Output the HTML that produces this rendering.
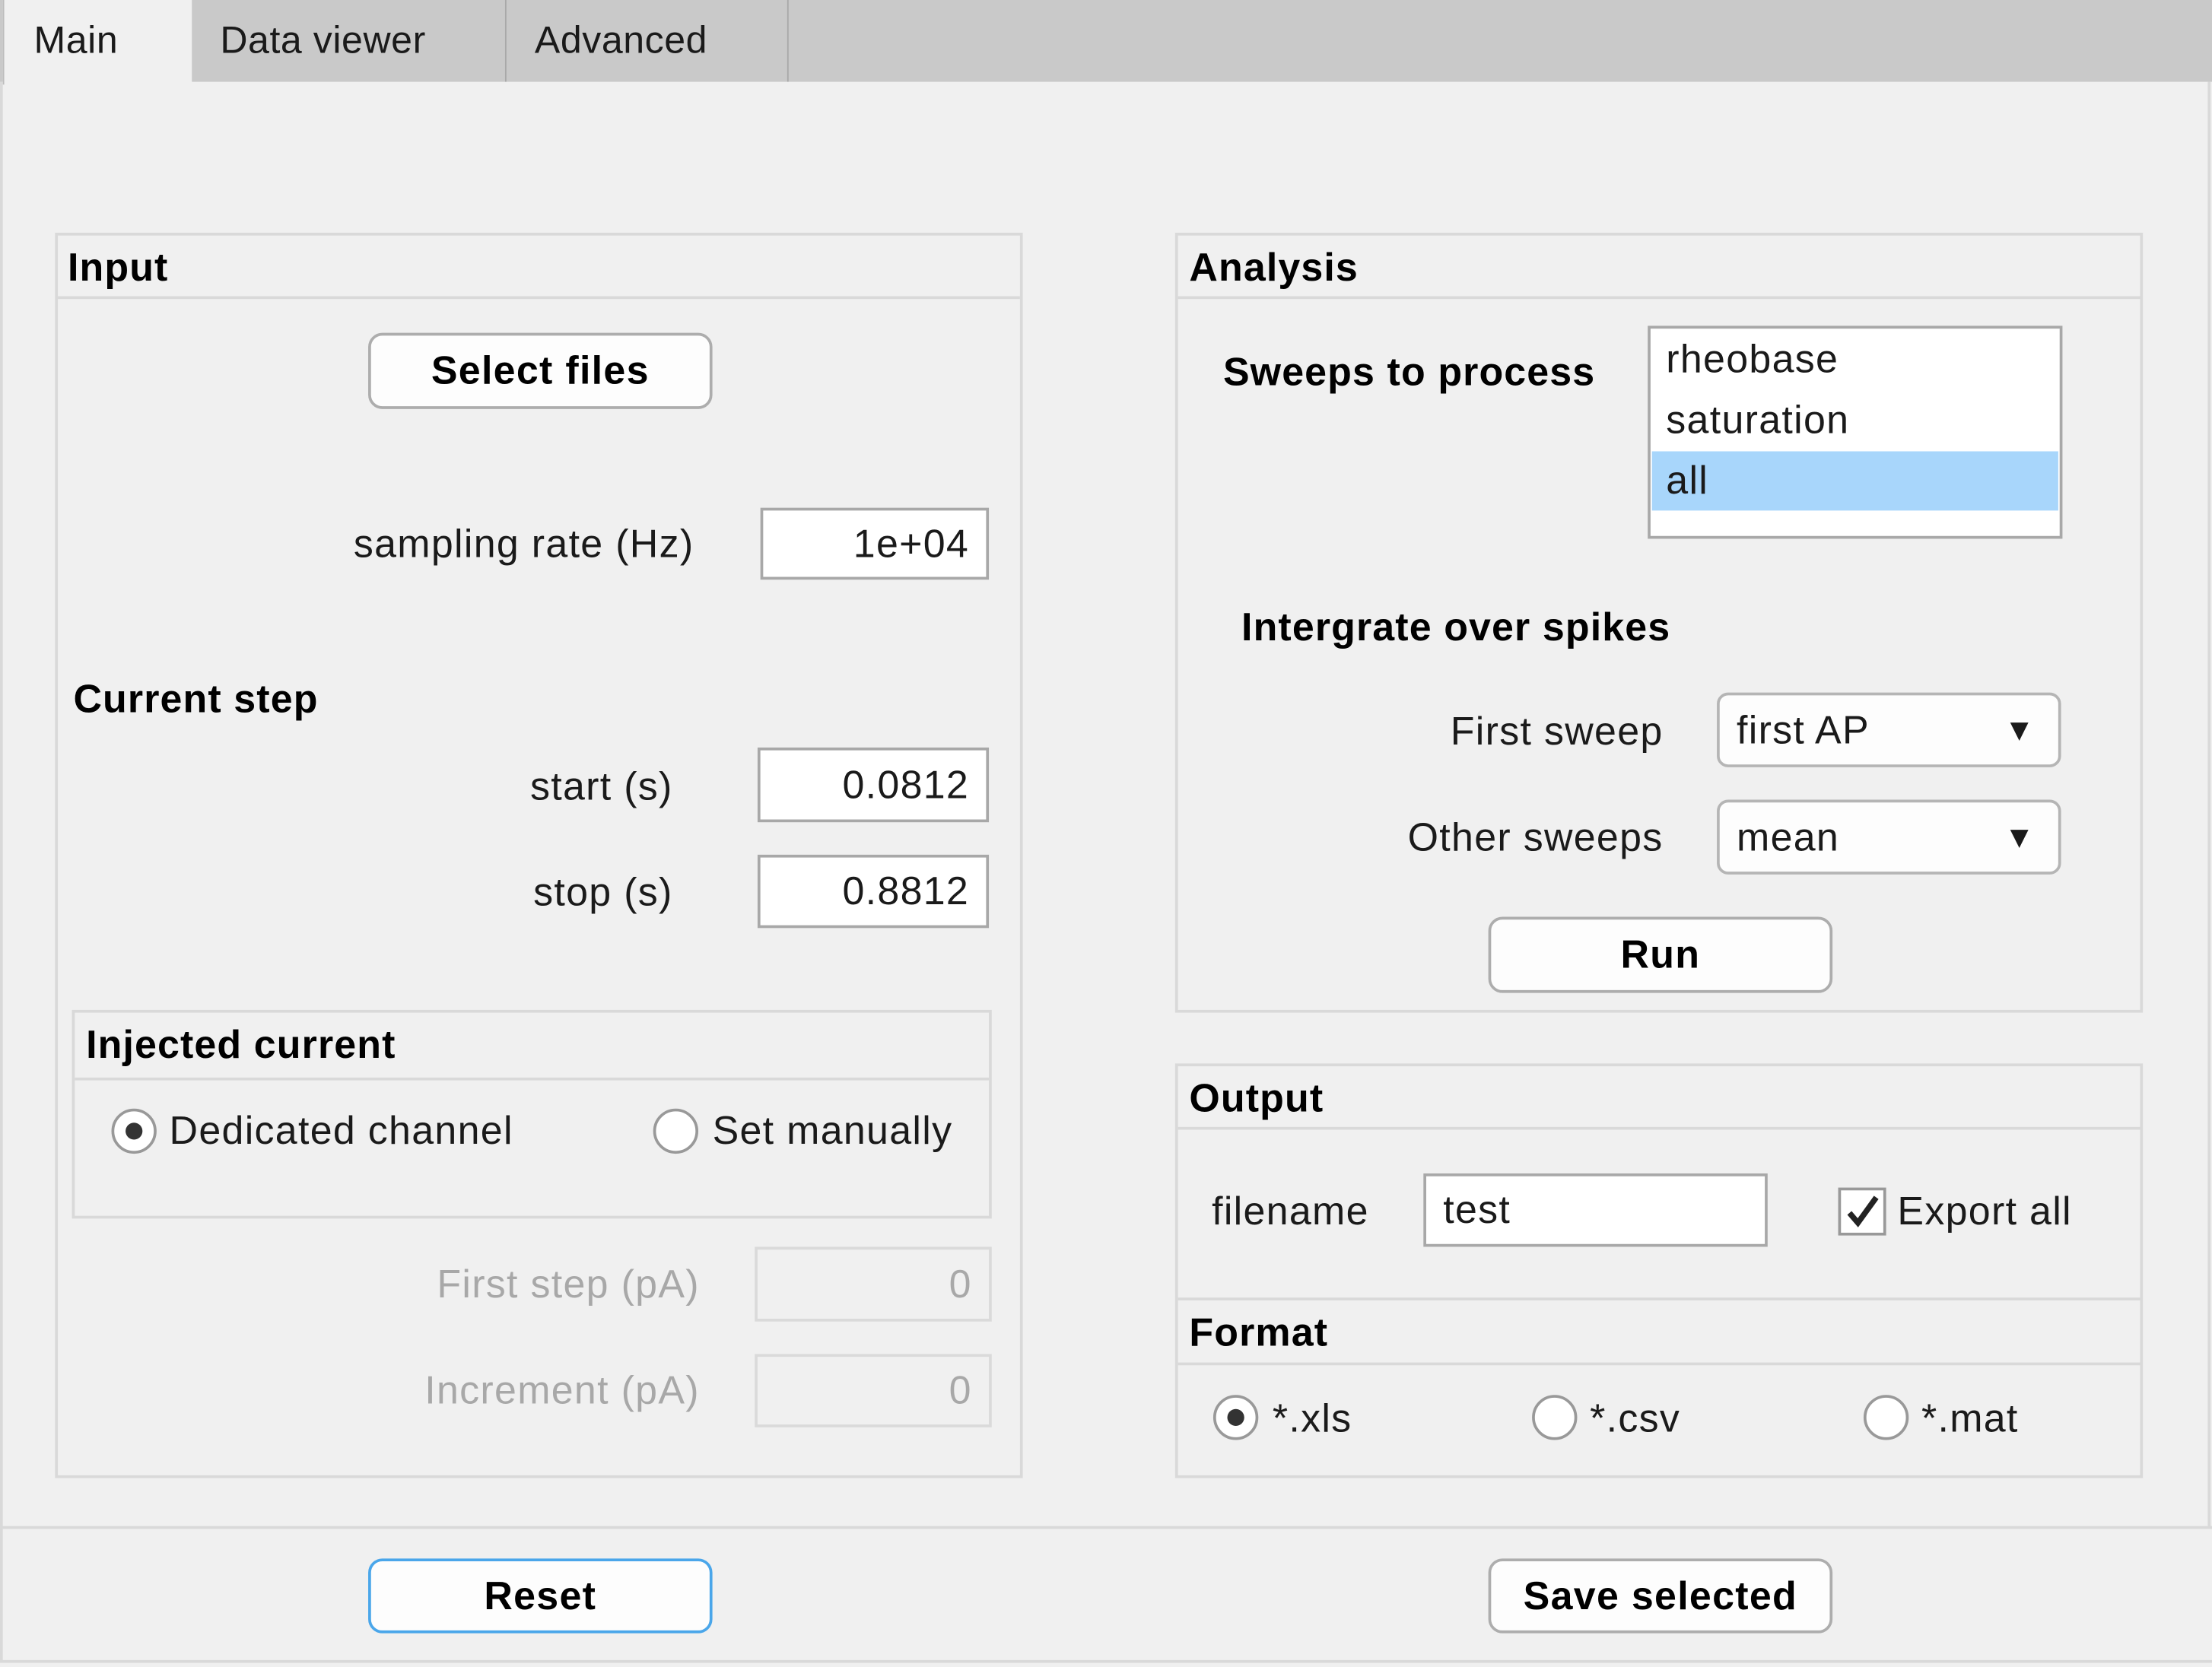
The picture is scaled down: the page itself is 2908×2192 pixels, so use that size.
<!DOCTYPE html>
<html><head><meta charset="utf-8">
<style>
html,body{margin:0;padding:0;background:#f0f0f0;overflow:hidden}
#root{position:absolute;left:0;top:0;width:1568px;height:1182px;transform:scale(1.8546);transform-origin:0 0;background:#f0f0f0;font-family:"Liberation Sans",Arial,sans-serif;font-size:28px;letter-spacing:0.7px;color:#1a1a1a}
.a{position:absolute;white-space:nowrap}
.b{font-weight:bold;color:#000;letter-spacing:0.6px}
.t{line-height:1;transform:translateY(-50%)}
.tab{font-size:27px;letter-spacing:0.3px}
.panel{position:absolute;border:2px solid #d9d9d9;box-sizing:border-box}
.hl{position:absolute;left:0;right:0;height:2px;background:#d9d9d9}
.btn{position:absolute;box-sizing:border-box;border:2px solid #adadad;border-radius:10px;background:#fdfdfd;font-weight:bold;color:#000;display:flex;align-items:center;justify-content:center}
.edit{position:absolute;box-sizing:border-box;border:2px solid #a8a8a8;background:#fff;display:flex;align-items:center;justify-content:flex-end;padding-right:12px}
.dis{background:#f0f0f0;border-color:#dadada;color:#a8a8a8}
.radio{position:absolute;width:32px;height:32px;box-sizing:border-box;border:2px solid #999;border-radius:50%;background:#fff}
.radio.on::after{content:"";position:absolute;left:8px;top:8px;width:12px;height:12px;border-radius:50%;background:#333}
.dd{position:absolute;box-sizing:border-box;border:2px solid #b5b5b5;border-radius:8px;background:#fdfdfd;display:flex;align-items:center;padding-left:12px}
.dd span{position:absolute;right:16px;font-size:22px}
.gray{color:#a8a8a8}
</style></head><body>
<div id="root">
 <div class="a" style="left:0;top:0;width:1568px;height:58px;background:#c9c9c9"></div>
 <div class="a" style="left:2px;top:0;width:133px;height:60px;background:#f0f0f0;border-left:1px solid #bdbdbd"></div>
 <div class="a" style="left:358px;top:0;width:1px;height:58px;background:#a9a9a9"></div>
 <div class="a" style="left:558px;top:0;width:1px;height:58px;background:#a9a9a9"></div>
 <div class="a t tab" style="left:24px;top:29px">Main</div>
 <div class="a t tab" style="left:156px;top:29px">Data viewer</div>
 <div class="a t tab" style="left:379px;top:29px">Advanced</div>
 <div class="a" style="left:0;top:58px;width:2px;height:1120px;background:#d9d9d9"></div>
 <div class="a" style="left:1565px;top:58px;width:2px;height:1026px;background:#d9d9d9"></div>

 <div class="panel" style="left:39px;top:165px;width:686px;height:883px"><div class="hl" style="top:43px"></div></div>
 <div class="a b t" style="left:48px;top:190px">Input</div>
 <div class="btn" style="left:261px;top:236px;width:244px;height:54px">Select files</div>
 <div class="a t" style="right:1076px;top:386px">sampling rate (Hz)</div>
 <div class="edit" style="left:539px;top:360px;width:162px;height:51px">1e+04</div>
 <div class="a b t" style="left:52px;top:496px">Current step</div>
 <div class="a t" style="right:1091px;top:558px">start (s)</div>
 <div class="edit" style="left:537px;top:530px;width:164px;height:53px">0.0812</div>
 <div class="a t" style="right:1091px;top:633px">stop (s)</div>
 <div class="edit" style="left:537px;top:606px;width:164px;height:52px">0.8812</div>

 <div class="panel" style="left:51px;top:716px;width:652px;height:148px"><div class="hl" style="top:46px"></div></div>
 <div class="a b t" style="left:61px;top:741px">Injected current</div>
 <div class="radio on" style="left:79px;top:786px"></div>
 <div class="a t" style="left:120px;top:802px">Dedicated channel</div>
 <div class="radio" style="left:463px;top:786px"></div>
 <div class="a t" style="left:505px;top:802px">Set manually</div>

 <div class="a t gray" style="right:1072px;top:911px">First step (pA)</div>
 <div class="edit dis" style="left:535px;top:884px;width:168px;height:53px">0</div>
 <div class="a t gray" style="right:1072px;top:986px">Increment (pA)</div>
 <div class="edit dis" style="left:535px;top:960px;width:168px;height:52px">0</div>

 <div class="panel" style="left:833px;top:165px;width:686px;height:553px"><div class="hl" style="top:43px"></div></div>
 <div class="a b t" style="left:843px;top:190px">Analysis</div>
 <div class="a b t" style="left:867px;top:264px">Sweeps to process</div>
 <div class="a" style="left:1168px;top:231px;width:294px;height:151px;box-sizing:border-box;border:2px solid #a8a8a8;background:#fff"></div>
 <div class="a" style="left:1171px;top:320px;width:288px;height:42px;background:#a8d6fb"></div>
 <div class="a t" style="left:1181px;top:255px">rheobase</div>
 <div class="a t" style="left:1181px;top:298px">saturation</div>
 <div class="a t" style="left:1181px;top:341px">all</div>
 <div class="a b t" style="left:880px;top:445px">Intergrate over spikes</div>
 <div class="a t" style="right:389px;top:519px">First sweep</div>
 <div class="dd" style="left:1217px;top:491px;width:244px;height:53px">first AP<span>▼</span></div>
 <div class="a t" style="right:389px;top:594px">Other sweeps</div>
 <div class="dd" style="left:1217px;top:567px;width:244px;height:53px">mean<span>▼</span></div>
 <div class="btn" style="left:1055px;top:650px;width:244px;height:54px">Run</div>

 <div class="panel" style="left:833px;top:754px;width:686px;height:294px">
   <div class="hl" style="top:43px"></div><div class="hl" style="top:164px"></div><div class="hl" style="top:210px"></div>
 </div>
 <div class="a b t" style="left:843px;top:779px">Output</div>
 <div class="a t" style="left:859px;top:859px">filename</div>
 <div class="edit" style="left:1009px;top:832px;width:244px;height:52px;justify-content:flex-start;padding-left:12px">test</div>
 <div class="a" style="left:1303px;top:842px;width:34px;height:34px;box-sizing:border-box;border:2px solid #999;background:#fff"></div>
 <svg class="a" style="left:1303px;top:842px" width="34" height="34" viewBox="0 0 34 34"><path d="M8 18 L14 25 L27 7" fill="none" stroke="#222" stroke-width="4"/></svg>
 <div class="a t" style="left:1345px;top:859px">Export all</div>
 <div class="a b t" style="left:843px;top:945px">Format</div>
 <div class="radio on" style="left:860px;top:989px"></div>
 <div class="a t" style="left:902px;top:1006px">*.xls</div>
 <div class="radio" style="left:1086px;top:989px"></div>
 <div class="a t" style="left:1127px;top:1006px">*.csv</div>
 <div class="radio" style="left:1321px;top:989px"></div>
 <div class="a t" style="left:1362px;top:1006px">*.mat</div>

 <div class="a" style="left:0;top:1082px;width:1568px;height:2px;background:#d9d9d9"></div>
 <div class="a" style="left:0;top:1177px;width:1568px;height:2px;background:#d9d9d9"></div>
 <div class="btn" style="left:261px;top:1105px;width:244px;height:53px;border-color:#4aa6ea">Reset</div>
 <div class="btn" style="left:1055px;top:1105px;width:244px;height:53px">Save selected</div>
</div>
</body></html>
